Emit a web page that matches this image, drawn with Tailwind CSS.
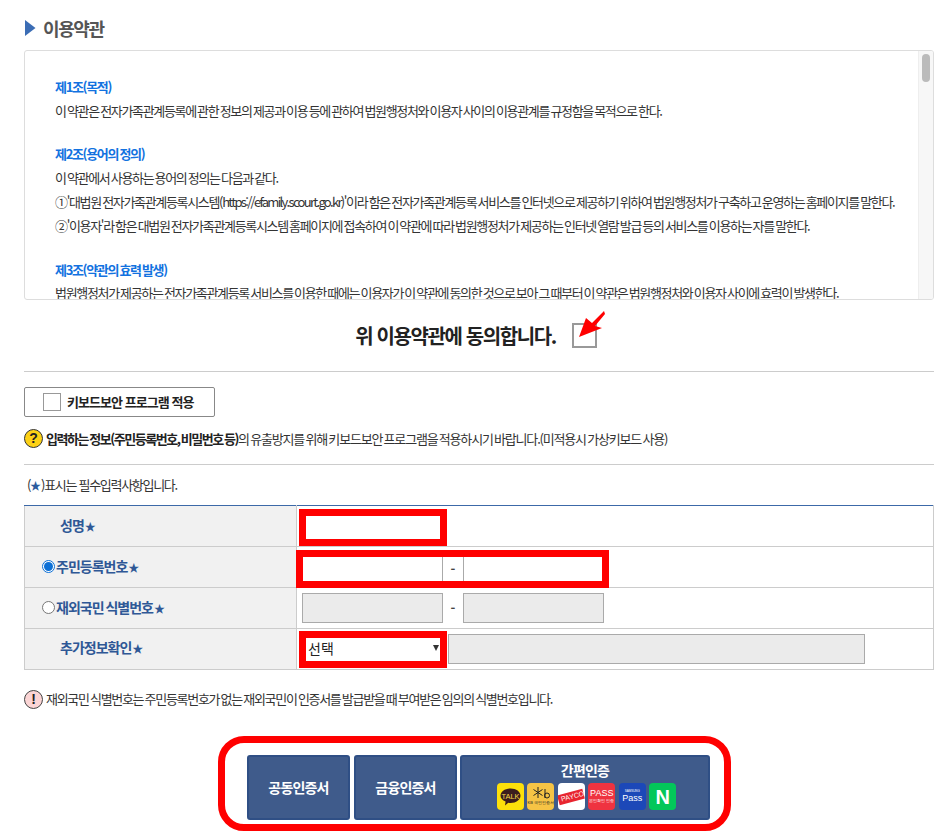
<!DOCTYPE html>
<html lang="ko">
<head>
<meta charset="UTF-8" />
<title>이용약관</title>
<script src="https://cdn.jsdelivr.net/npm/@tailwindcss/browser@4"></script>
</head>
<body class="bg-white font-['Noto_Sans_CJK_KR','Noto_Sans',sans-serif] text-[13px] text-[#333] overflow-hidden">
<div class="relative w-[949px] h-[831px] overflow-hidden pl-[24px] pr-[15px]">

	<!-- title -->
	<div class="flex items-center h-[50px] pt-[6px]">
		<svg class="w-[11px] h-[16px] mr-[7px] ml-[1px]" viewBox="0 0 11 16"><path fill="#3b6db5" d="M0 0 L10.5 8 L0 16 Z"/></svg>
		<h2 class="text-[18px] font-bold tracking-[-1.4px] text-[#555]">이용약관</h2>
	</div>

	<!-- terms box -->
	<div class="flex h-[250px] border border-[#ddd] rounded-[3px] overflow-hidden">
		<div class="flex-1 overflow-hidden pl-[30px] pt-[24px] tracking-[-1.33px] [word-spacing:-1px] leading-[23.5px] whitespace-nowrap">
			<p class="text-[#1272e0] font-semibold">제1조(목적)</p>
			<p>이 약관은 전자가족관계등록에 관한 정보의 제공과 이용 등에 관하여 법원행정처와 이용자 사이의 이용관계를 규정함을 목적으로 한다.</p>
			<p class="text-[#1272e0] font-semibold mt-[20px]">제2조(용어의 정의)</p>
			<p>이 약관에서 사용하는 용어의 정의는 다음과 같다.</p>
			<p class="mt-[1px]">①'대법원 전자가족관계등록시스템(<span class="tracking-[-1.7px]">https://efamily.scourt.go.kr</span>)'이라 함은 전자가족관계등록 서비스를 인터넷으로 제공하기 위하여 법원행정처가 구축하고 운영하는 홈페이지를 말한다.</p>
			<p class="mt-[0.5px]">②'이용자'라 함은 대법원 전자가족관계등록시스템 홈페이지에 접속하여 이 약관에 따라 법원행정처가 제공하는 인터넷 열람 발급 등의 서비스를 이용하는 자를 말한다.</p>
			<p class="text-[#1272e0] font-semibold mt-[20px]">제3조(약관의 효력 발생)</p>
			<p>법원행정처가 제공하는 전자가족관계등록 서비스를 이용한 때에는 이용자가 이 약관에 동의한 것으로 보아 그 때부터 이 약관은 법원행정처와 이용자 사이에 효력이 발생한다.</p>
		</div>
		<div class="w-[15px] shrink-0 bg-[#f7f7f7] border-l border-[#eee] pt-[3px] pl-[3px]">
			<div class="w-[8px] h-[28px] rounded-full bg-[#bbb]"></div>
		</div>
	</div>

	<!-- agree -->
	<div class="flex items-center justify-center h-[72px] border-b border-[#ccc] gap-[16px] pr-[6px]">
		<span class="text-[20px] font-bold tracking-[-1.4px] text-[#222]">위 이용약관에 동의합니다.</span>
		<span class="relative w-[25px] h-[25px] border-[2px] border-[#999] bg-white">
			<svg class="absolute left-[4px] top-[-15px] w-[28px] h-[28px]" viewBox="0 0 28 28"><path fill="#f00" d="M1 27 L8 8 L14 13 L26 1 L27 4 L17 16 L24 18 Z"/></svg>
		</span>
	</div>

	<!-- keyboard security -->
	<button class="flex items-center w-[191px] h-[30px] mt-[15px] border border-[#888] rounded-[2px] pl-[18px] gap-[6px] font-bold tracking-[-0.95px] text-[#222]">
		<span class="w-[18px] h-[18px] border border-[#999] bg-white"></span>
		키보드보안 프로그램 적용
	</button>
	<div class="flex items-center h-[48px] border-b border-[#ccc] gap-[3px] tracking-[-1.2px] [word-spacing:-1px] pb-[4px]">
		<span class="flex items-center justify-center w-[19px] h-[19px] rounded-full bg-[#fcd116] border border-[#333] font-['Liberation_Sans',sans-serif] font-bold text-[14px] text-[#222] tracking-normal">?</span>
		<p><b class="text-[#222] font-semibold tracking-[-1.45px]">입력하는 정보(주민등록번호, 비밀번호 등)</b>의 유출방지를 위해 키보드보안 프로그램을 적용하시기 바랍니다.(미적용시 가상키보드 사용)</p>
	</div>
	<p class="h-[40px] pt-[10px] pl-[3px] tracking-[-1.3px] leading-[20px]">(<span class="text-[#2b5c9e] font-bold text-[11px] leading-none tracking-normal">★</span>)표시는 필수입력사항입니다.</p>

	<!-- form table -->
	<table class="w-[910px] table-fixed border-collapse">
		<colgroup><col class="w-[272px]"><col></colgroup>
		<tbody>
			<tr class="h-[41px]">
				<th class="border border-[#ccc] border-t-[#3c69a8] bg-[#f1f1f1] text-left pl-[35px] pb-[2px] text-[#2f5896] font-bold tracking-[-1px] text-[14px]">성명<span class="ml-[1px] text-[11px] leading-none">★</span></th>
				<td class="border border-[#ccc] border-t-[#3c69a8] p-0 pl-[2px] align-top">
					<div class="w-[148px] h-[37px] mt-[3px] border-[7px] border-[#f00] bg-white"></div>
				</td>
			</tr>
			<tr class="h-[41px]">
				<th class="border border-[#ccc] bg-[#f1f1f1] text-left pl-[17px] pb-[2px] text-[#2f5896] font-bold tracking-[-1px] text-[14px]">
					<div class="flex items-center gap-[1px]">
						<span class="flex items-center justify-center w-[13px] h-[13px] rounded-full border border-[#0b6fd6] bg-white"><span class="w-[9px] h-[9px] rounded-full bg-[#0b6fd6]"></span></span>
						<span>주민등록번호<span class="ml-[1px] text-[11px] leading-none">★</span></span>
					</div>
				</th>
				<td class="border border-[#ccc] p-0 align-top">
					<div class="relative flex w-[313px] h-[38px] mt-[3px] -mb-[1px] -ml-[1px] border-[7px] border-[#f00] bg-white">
						<div class="w-[140px] border-r border-[#aaa]"></div>
						<div class="w-[20px] flex items-center justify-center text-[#444] font-bold">-</div>
						<div class="flex-1 border-l border-[#aaa]"></div>
					</div>
				</td>
			</tr>
			<tr class="h-[41px]">
				<th class="border border-[#ccc] bg-[#f1f1f1] text-left pl-[17px] pb-[2px] text-[#2f5896] font-bold tracking-[-1px] [word-spacing:-1px] text-[14px]">
					<div class="flex items-center gap-[1px]">
						<span class="w-[13px] h-[13px] rounded-full border border-[#777] bg-white"></span>
						<span>재외국민 식별번호<span class="ml-[1px] text-[11px] leading-none">★</span></span>
					</div>
				</th>
				<td class="border border-[#ccc] p-0 pl-[5px]">
					<div class="flex items-center">
						<div class="w-[141px] h-[30px] border border-[#aaa] bg-[#ebebeb]"></div>
						<div class="w-[20px] text-center text-[#444] font-bold">-</div>
						<div class="w-[141px] h-[30px] border border-[#aaa] bg-[#ebebeb]"></div>
					</div>
				</td>
			</tr>
			<tr class="h-[41px]">
				<th class="border border-[#ccc] bg-[#f1f1f1] text-left pl-[35px] pb-[4px] text-[#2f5896] font-bold tracking-[-1px] text-[14px]">추가정보확인<span class="ml-[1px] text-[11px] leading-none">★</span></th>
				<td class="border border-[#ccc] p-0 pl-[2px]">
					<div class="flex items-center gap-[1px]">
						<div class="flex items-center justify-between w-[148px] h-[37px] border-[7px] border-[#f00] bg-white pl-[2px] pr-[1px] pb-[2px] text-[14px] text-[#222]">
							<span>선택</span>
							<svg class="w-[6px] h-[6px]" viewBox="0 0 6 6"><path fill="#333" d="M0 0 H6 L3 6 Z"/></svg>
						</div>
						<div class="w-[417px] h-[30px] border border-[#aaa] bg-[#ebebeb]"></div>
					</div>
				</td>
			</tr>
		</tbody>
	</table>

	<!-- notice -->
	<div class="flex items-center h-[60px] gap-[3px] tracking-[-1.3px] [word-spacing:-1px] pb-[2px]">
		<span class="flex items-center justify-center w-[19px] h-[19px] rounded-full bg-[#fbd5d5] border border-[#444] font-['Liberation_Sans',sans-serif] font-bold text-[14px] text-[#222] tracking-normal">!</span>
		<p>재외국민 식별번호는 주민등록번호가 없는 재외국민이 인증서를 발급받을 때 부여받은 임의의 식별번호입니다.</p>
	</div>

	<!-- auth buttons -->
	<div class="flex justify-center mt-[6px] ml-[-9px]">
		<div class="flex gap-[3px] w-[513px] h-[95px] border-[7px] border-[#f00] rounded-[26px] pl-[22px] pt-[12px] text-white font-bold text-[14px] tracking-[-0.8px]">
			<button class="w-[103px] h-[65px] bg-[#3f5b8b] border-2 border-[#2f4f85] rounded-[3px]">공동인증서</button>
			<button class="w-[103px] h-[65px] ml-[1px] bg-[#3f5b8b] border-2 border-[#2f4f85] rounded-[3px]">금융인증서</button>
			<div class="w-[250px] h-[65px] bg-[#3f5b8b] border-2 border-[#2f4f85] rounded-[3px] flex flex-col items-center">
				<span class="leading-[24px] mt-[1px]">간편인증</span>
				<div class="flex gap-[3.5px] mt-[1px] ml-[3px] font-['Liberation_Sans',sans-serif] tracking-normal">
					<span class="w-[27px] h-[27px] rounded-[4px] bg-[#fde00a]">
						<svg class="w-[27px] h-[27px]" viewBox="0 0 27 27"><path fill="#3c1e1e" d="M13.5 5.5c5.8 0 10 3.2 10 7.2s-4.2 7.2-10 7.2c-.8 0-1.5 0-2.2-.2L8 22.5l.6-4C5.400 17.200 3.500 15.200 3.500 12.700c0-4 4.200-7.200 10-7.200z"/><text x="13.500" y="15.500" text-anchor="middle" font-size="7.500" fill="#f5d94a" font-weight="400">TALK</text></svg>
					</span>
					<span class="w-[27px] h-[27px] rounded-[4px] bg-[#f6c445] flex flex-col items-center text-[#222]">
						<svg class="w-[27px] h-[17px]" viewBox="0 0 27 17"><path fill="none" stroke="#222" stroke-width="1" d="M11 4v11M6.500 6.500l9 6M15.500 6.500l-9 6M18 6v9"/><circle cx="20" cy="12.500" r="2.500" fill="none" stroke="#222" stroke-width="1"/></svg>
						<span class="text-[4px] font-normal leading-none mt-[1px]">KB 국민인증서</span>
					</span>
					<span class="flex items-center justify-center w-[27px] h-[27px] rounded-[4px] bg-white overflow-hidden"><span class="shrink-0 bg-[#e8252f] text-white text-[7px] font-normal leading-[10px] pl-[3px] -ml-[1px] -rotate-[15deg]">PAYCO</span></span>
					<span class="flex flex-col items-center justify-center w-[27px] h-[27px] rounded-[4px] bg-[#ef3340] text-white text-[9px] font-normal leading-none"><span>PASS</span><span class="text-[3.500px] mt-[2px]">본인확인 인증</span></span>
					<span class="flex flex-col items-center justify-center w-[27px] h-[27px] rounded-[4px] bg-[#1c48b8] text-white text-[9px] font-normal leading-none"><span class="text-[3px] mb-[1px]">SAMSUNG</span><span>Pass</span></span>
					<span class="flex items-center justify-center w-[27px] h-[27px] rounded-[4px] bg-[#03c75a] text-white text-[20px] font-bold leading-none">N</span>
				</div>
			</div>
		</div>
	</div>
</div>
</body>
</html>
